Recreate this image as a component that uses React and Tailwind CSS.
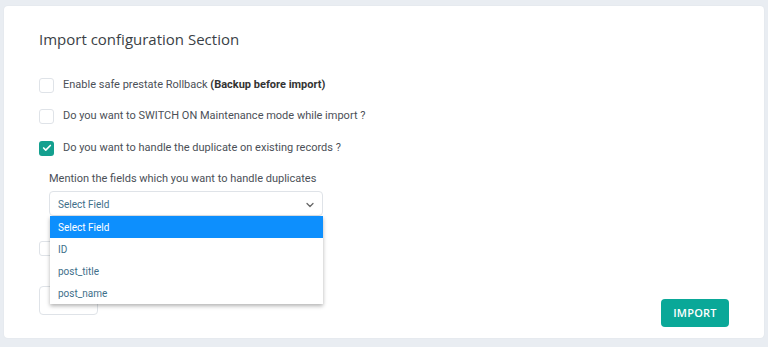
import React from "react";
import { ChevronDown, Check } from "lucide-react";

function Box({ checked }) {
  return checked ? (
    <div className="w-[15px] h-[15px] rounded-[3px] bg-[#14a08f] flex items-center justify-center shrink-0">
      <Check size={10} strokeWidth={4} color="#ffffff" />
    </div>
  ) : (
    <div className="w-[15px] h-[15px] rounded-[3px] border border-[#dfe3e8] bg-white shrink-0" />
  );
}

function Row({ checked, children, className = "" }) {
  return (
    <div className={"flex items-center h-[20px] gap-[9px] " + className}>
      <Box checked={checked} />
      <span className="text-[11px] text-[#4b5057] leading-[20px]">{children}</span>
    </div>
  );
}

export default function App() {
  return (
    <div
      className="w-[768px] h-[347px] bg-[#e9edf2] pt-[6px] px-[4px] overflow-hidden"
      style={{ fontFamily: "Roboto, 'Liberation Sans', sans-serif" }}
    >
      <div className="relative h-[332px] bg-white rounded-[4px] pt-[23px] pl-[35px] pr-[35px] shadow-[0_0_2px_rgba(0,0,0,0.05)]">
        <h2
          className="text-[15px] leading-[20px] text-[#3a3f46] font-normal"
          style={{ fontFamily: "'Open Sans', Inter, sans-serif" }}
        >
          Import configuration Section
        </h2>

        <Row className="mt-[26px]">
          Enable safe prestate Rollback <b className="font-bold text-[#333]">(Backup before import)</b>
        </Row>
        <Row className="mt-[11px]">Do you want to SWITCH ON Maintenance mode while import ?</Row>
        <Row checked className="mt-[12px]">Do you want to handle the duplicate on existing records ?</Row>

        <div className="ml-[10px] mt-[13px] text-[11px] leading-[16px] text-[#4b5057]">
          Mention the fields which you want to handle duplicates
        </div>

        <div className="relative ml-[10px] mt-[4px] w-[274px]">
          <div className="h-[25px] border border-[#dfe3e8] rounded-[4px] bg-white flex items-center justify-between pl-[8px] pr-[6px] pt-[2px]">
            <span className="text-[10px] text-[#3e6f8a]">Select Field</span>
            <ChevronDown size={12} strokeWidth={2.5} color="#666" />
          </div>
          <div className="absolute left-[1px] top-full w-[273px] bg-white shadow-[0_2px_4px_rgba(0,0,0,0.3)] z-10">
            <div className="h-[22px] bg-[#0d8ffd] text-white text-[10px] flex items-center pl-[8px]">Select Field</div>
            <div className="h-[22px] text-[#3e6f8a] text-[10px] flex items-center pl-[8px]">ID</div>
            <div className="h-[22px] text-[#3e6f8a] text-[10px] flex items-center pl-[8px]">post_title</div>
            <div className="h-[22px] text-[#3e6f8a] text-[10px] flex items-center pl-[8px]">post_name</div>
          </div>
        </div>

        <div className="mt-[25px]">
          <Box />
        </div>

        <div className="flex justify-between items-start mt-[30px]">
          <div className="w-[59px] h-[29px] border border-[#dfe3e8] rounded-[4px] bg-white" />
          <button
            className="mt-[13px] w-[68px] h-[28px] rounded-[4px] bg-[#0aa898] text-white text-[11px] font-semibold tracking-[0.2px]"
            style={{ fontFamily: "'Open Sans', Inter, sans-serif" }}
          >
            IMPORT
          </button>
        </div>
      </div>
    </div>
  );
}
